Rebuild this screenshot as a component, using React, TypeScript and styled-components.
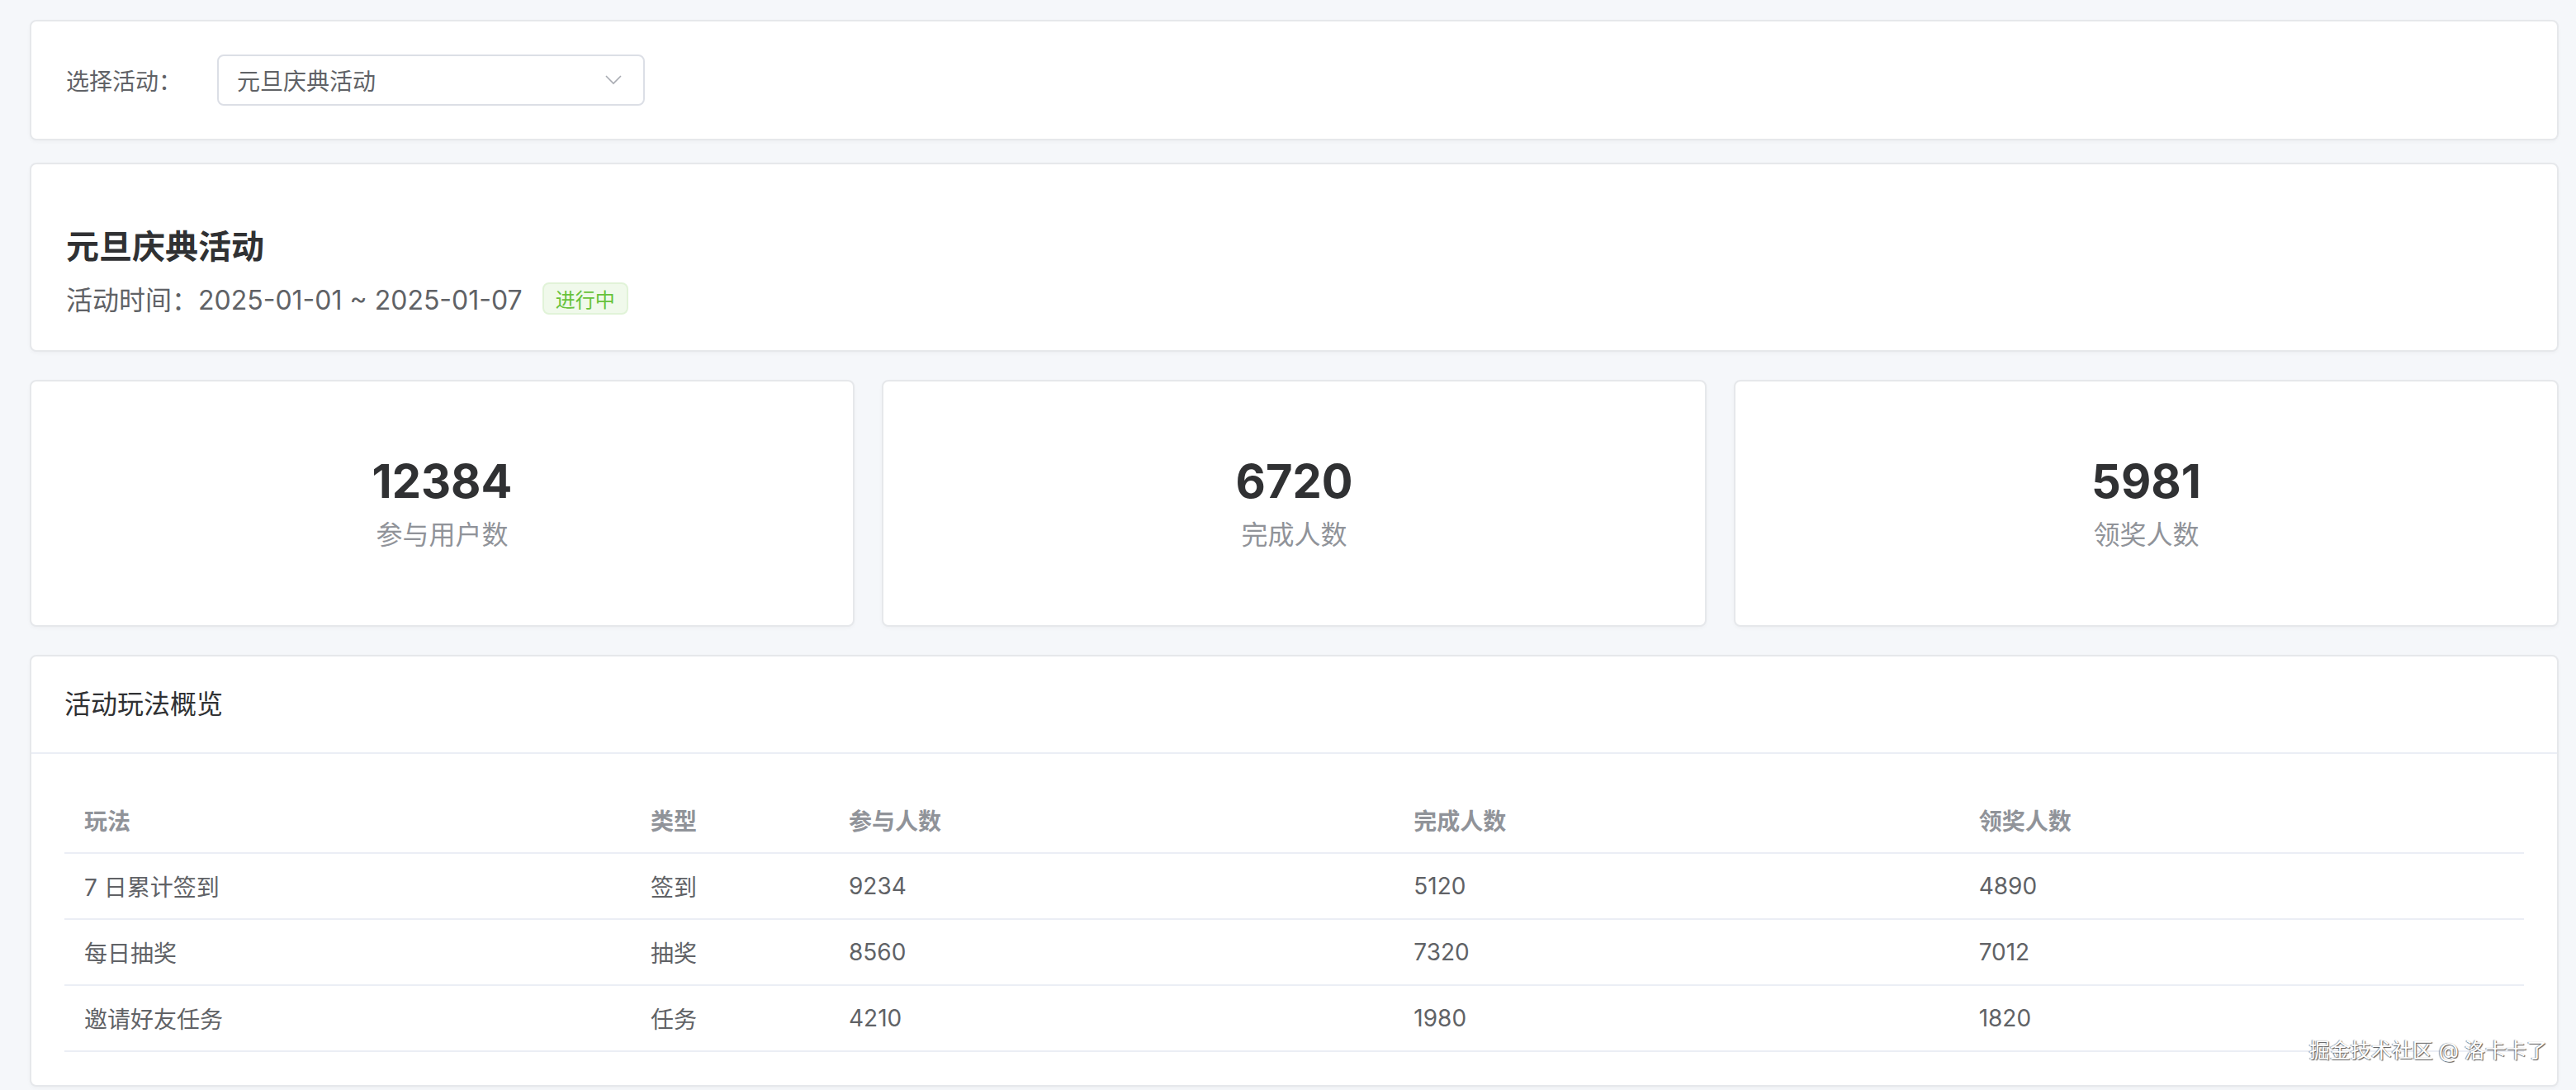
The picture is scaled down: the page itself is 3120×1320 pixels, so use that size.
import React from 'react'
import styled, { createGlobalStyle } from 'styled-components'

interface Stat {
  value: number
  label: string
}

interface PlayRow {
  name: string
  type: string
  joined: number
  finished: number
  rewarded: number
}

const stats: Stat[] = [
  { value: 12384, label: '参与用户数' },
  { value: 6720, label: '完成人数' },
  { value: 5981, label: '领奖人数' },
]

const columns = ['玩法', '类型', '参与人数', '完成人数', '领奖人数']

const rows: PlayRow[] = [
  { name: '7 日累计签到', type: '签到', joined: 9234, finished: 5120, rewarded: 4890 },
  { name: '每日抽奖', type: '抽奖', joined: 8560, finished: 7320, rewarded: 7012 },
  { name: '邀请好友任务', type: '任务', joined: 4210, finished: 1980, rewarded: 1820 },
]

const ChevronDown = () => (
  <svg width="20" height="12" viewBox="0 0 20 12" fill="none">
    <path d="M1 1l9 9 9-9" stroke="#a8abb2" strokeWidth="1.6" />
  </svg>
)

export default function App() {
  return (
    <>
      <GlobalStyle />
      <Page>
        <TopGroup>
          <FilterCard>
            <FieldLabel>选择活动：</FieldLabel>
            <Select>
              <SelectValue>元旦庆典活动</SelectValue>
              <ChevronDown />
            </Select>
          </FilterCard>

          <InfoCard>
            <Title>元旦庆典活动</Title>
            <Meta>
              <span>活动时间：2025-01-01 ~ 2025-01-07</span>
              <Tag>进行中</Tag>
            </Meta>
          </InfoCard>
        </TopGroup>

        <StatsRow>
          {stats.map(s => (
            <StatCard key={s.label}>
              <StatValue>{s.value}</StatValue>
              <StatLabel>{s.label}</StatLabel>
            </StatCard>
          ))}
        </StatsRow>

        <TableCard>
          <CardHeader>活动玩法概览</CardHeader>
          <CardBody>
            <Table>
              <colgroup>
                <col style={{ width: 686 }} />
                <col style={{ width: 240 }} />
                <col />
                <col />
                <col />
              </colgroup>
              <thead>
                <tr>
                  {columns.map(col => (
                    <Th key={col}>{col}</Th>
                  ))}
                </tr>
              </thead>
              <tbody>
                {rows.map(row => (
                  <tr key={row.name}>
                    <Td>{row.name}</Td>
                    <Td>{row.type}</Td>
                    <Td>{row.joined}</Td>
                    <Td>{row.finished}</Td>
                    <Td>{row.rewarded}</Td>
                  </tr>
                ))}
              </tbody>
            </Table>
          </CardBody>
        </TableCard>

        <Watermark>掘金技术社区 @ 洛卡卡了</Watermark>
      </Page>
    </>
  )
}

const GlobalStyle = createGlobalStyle`
  html, body {
    margin: 0;
    padding: 0;
    background: #f5f7fa;
  }
  body {
    font-family: Inter, 'Noto Sans CJK SC', sans-serif;
    color: #303133;
  }
  * {
    box-sizing: border-box;
  }
`

const Page = styled.main`
  position: relative;
  display: flex;
  flex-direction: column;
  gap: 34px;
  padding: 24px 21px 0 36px;
  min-height: 1320px;
`

const TopGroup = styled.div`
  display: flex;
  flex-direction: column;
  gap: 27px;
`

const Card = styled.section`
  background: #fff;
  border: 2px solid #e6e8eb;
  border-radius: 8px;
  box-shadow: 0 2px 4px rgba(0, 0, 0, 0.03);
`

const FilterCard = styled(Card)`
  display: flex;
  align-items: center;
  padding: 40px 42px;
`

const FieldLabel = styled.label`
  font-size: 28px;
  color: #606266;
  margin-right: 43px;
`

const Select = styled.div`
  display: flex;
  align-items: center;
  justify-content: space-between;
  width: 518px;
  height: 62px;
  padding: 0 26px 0 22px;
  border: 2px solid #dcdfe6;
  border-radius: 8px;
`

const SelectValue = styled.span`
  font-size: 28px;
  color: #606266;
`

const InfoCard = styled(Card)`
  padding: 40px 42px;
`

const Title = styled.h2`
  margin: 33px 0 13px;
  font-size: 40px;
  line-height: 53px;
  font-weight: 700;
  color: #303133;
`

const Meta = styled.div`
  display: flex;
  align-items: center;
  gap: 24px;
  font-size: 32px;
  color: #606266;
`

const Tag = styled.span`
  display: inline-flex;
  align-items: center;
  height: 39px;
  padding: 0 14px;
  font-size: 24px;
  color: #67c23a;
  background: #f0f9eb;
  border: 2px solid #e1f3d8;
  border-radius: 8px;
`

const StatsRow = styled.div`
  display: grid;
  grid-template-columns: repeat(3, 1fr);
  gap: 33px;
`

const StatCard = styled(Card)`
  padding: 88px 40px;
  text-align: center;
`

const StatValue = styled.div`
  font-size: 56px;
  line-height: 67px;
  font-weight: 700;
  color: #303133;
  margin-bottom: 10px;
`

const StatLabel = styled.div`
  font-size: 32px;
  line-height: 42px;
  color: #909399;
`

const TableCard = styled(Card)`
  margin-bottom: 3px;
`

const CardHeader = styled.header`
  padding: 37px 40px;
  font-size: 32px;
  line-height: 42px;
  color: #303133;
  border-bottom: 2px solid #ebeef5;
`

const CardBody = styled.div`
  padding: 40px;
`

const Table = styled.table`
  width: 100%;
  table-layout: fixed;
  border-collapse: collapse;
  font-size: 28px;
`

const Th = styled.th`
  height: 80px;
  padding: 0 24px;
  text-align: left;
  font-weight: 600;
  color: #909399;
  border-bottom: 2px solid #ebeef5;
`

const Td = styled.td`
  height: 80px;
  padding: 0 24px;
  color: #606266;
  border-bottom: 2px solid #ebeef5;
`

const Watermark = styled.div`
  position: absolute;
  right: 35px;
  bottom: 32px;
  font-size: 25px;
  color: #fff;
  text-shadow: 1px 1px 1px #555, -1px 0 1px #888;
`
